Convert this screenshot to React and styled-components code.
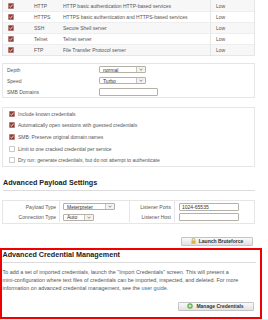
import React from 'react';
import styled, { createGlobalStyle } from 'styled-components';

const GlobalStyle = createGlobalStyle`
  html, body {
    margin: 0;
    padding: 0;
    background: #ffffff;
  }
  body {
    font-family: "Liberation Sans", Arial, sans-serif;
  }
`;

const Page = styled.div`
  width: 268px;
  height: 320px;
  overflow: hidden;
  display: flex;
  flex-direction: column;
  font-size: 5px;
  color: #555;
  background: #fff;
`;

const Box = styled.div`
  margin: ${p => p.$top || 0}px 13px 0 2px;
  border: 1px solid #e6e6e6;
  display: flex;
  flex-direction: column;
`;

const ServiceRow = styled.div`
  display: grid;
  grid-template-columns: 27px 30px 150px 1fr;
  height: 11px;
  box-sizing: border-box;
  align-items: center;
  border-top: ${p => (p.$first ? 'none' : '1px solid #eeeeee')};
  background: ${p => (p.$odd ? '#f7f7f7' : '#ffffff')};
`;

const Cell = styled.div`
  display: flex;
  align-items: center;
  height: 100%;
  padding-left: ${p => p.$pad || 0}px;
  border-left: ${p => (p.$line ? '1px solid #e6e6e6' : 'none')};
  white-space: nowrap;
  overflow: hidden;
`;

const FieldRow = styled.div`
  display: flex;
  align-items: center;
  height: 11px;
  padding-left: 4px;
`;

const FieldLabel = styled.div`
  width: 92px;
`;

const SelectBox = styled.div`
  display: flex;
  align-items: stretch;
  width: ${p => p.$w}px;
  height: 7px;
  border: 1px solid #b5b1a6;
  border-radius: 1px;
  background: #fff;
  color: #333;
  box-sizing: border-box;
`;

const SelectText = styled.div`
  flex: 1;
  display: flex;
  align-items: center;
  padding-left: 3px;
`;

const SelectArrow = styled.div`
  width: 8px;
  border-left: 1px solid #c9c5bb;
  display: flex;
  align-items: center;
  justify-content: center;
  background: #f4f3ef;
`;

const TextInput = styled.div`
  width: ${p => p.$w}px;
  height: 8px;
  border: 1px solid #b5b1a6;
  border-radius: 1px;
  box-sizing: border-box;
  display: flex;
  align-items: center;
  padding-left: 2px;
  color: #333;
`;

const OptionList = styled.div`
  display: flex;
  flex-direction: column;
`;

const OptionRow = styled.div`
  display: flex;
  align-items: center;
  gap: 3px;
  height: 11.6px;
  padding-left: 6px;
`;

const SectionTitle = styled.div`
  margin: ${p => p.$top || 0}px 13px 0 3px;
  font-size: 7.2px;
  font-weight: bold;
  color: #222;
  line-height: 9px;
  padding-bottom: 3px;
  border-bottom: 1px solid #dcdcdc;
`;

const PayloadGrid = styled.div`
  display: grid;
  grid-template-columns: 56px 70px 45px 1fr;
  grid-auto-rows: 10.5px;
  padding: 0.5px 0;
`;

const PayloadLabel = styled.div`
  display: flex;
  align-items: center;
  justify-content: flex-end;
  padding-right: 3px;
  border-left: ${p => (p.$line ? '1px solid #e6e6e6' : 'none')};
`;

const PayloadField = styled.div`
  display: flex;
  align-items: center;
  padding-left: ${p => p.$pad || 3}px;
  border-left: 1px solid #e6e6e6;
`;

const ButtonRow = styled.div`
  display: flex;
  justify-content: flex-end;
  padding-right: ${p => p.$right}px;
  margin-top: ${p => p.$top}px;
`;

const Button = styled.div`
  display: flex;
  align-items: center;
  justify-content: center;
  gap: 3px;
  width: ${p => p.$w}px;
  height: 9px;
  box-sizing: border-box;
  border: 1px solid #c4c4c4;
  border-radius: 1px;
  background: linear-gradient(#fafafa, #e2e2e2);
  color: #333;
  font-weight: bold;
  font-size: 5px;
`;

const Highlight = styled.div`
  margin-top: 2px;
  width: 262px;
  height: 71px;
  flex-shrink: 0;
  box-sizing: border-box;
  border: 2.5px solid #f00000;
  display: flex;
  flex-direction: column;
`;

const HighlightTitle = styled.div`
  margin: 0 4px 0 0.5px;
  font-size: 7.2px;
  font-weight: bold;
  color: #222;
  line-height: 9px;
  padding-bottom: 3px;
  border-bottom: 1px solid #dcdcdc;
`;

const Paragraph = styled.p`
  margin: 5px 0 0 0.5px;
  width: 240px;
  font-size: 5.4px;
  line-height: 8px;
  color: #555;
`;

const NoBreak = styled.span`
  white-space: nowrap;
`;

const Link = styled.span`
  color: #2f6fae;
`;

const BottomStrip = styled.div`
  flex: 1;
  background: #eeeeee;
`;

const Checkbox = ({ checked }) => (
  <svg width="6" height="6" viewBox="0 0 6 6">
    {checked ? (
      <>
        <rect x="0.3" y="0.3" width="5.4" height="5.4" rx="0.6" fill="#8e3b34" stroke="#b98a84" strokeWidth="0.6" />
        <path d="M1.4 3 L2.6 4.2 L4.7 1.6" fill="none" stroke="#f3e6e4" strokeWidth="0.9" />
      </>
    ) : (
      <rect x="0.4" y="0.4" width="5.2" height="5.2" rx="0.5" fill="#fff" stroke="#9a9a9a" strokeWidth="0.6" />
    )}
  </svg>
);

const Chevron = () => (
  <svg width="4" height="3" viewBox="0 0 4 3">
    <path d="M0.5 0.7 L2 2.3 L3.5 0.7" fill="none" stroke="#555" strokeWidth="0.6" />
  </svg>
);

const LockIcon = () => (
  <svg width="5" height="6" viewBox="0 0 5 6">
    <path d="M1.2 2.6 V1.7 A1.3 1.3 0 0 1 3.8 1.7 V2.6" fill="none" stroke="#a88a3c" strokeWidth="0.7" />
    <rect x="0.4" y="2.6" width="4.2" height="3.2" rx="0.4" fill="#e0b440" />
  </svg>
);

const PlusIcon = () => (
  <svg width="6" height="6" viewBox="0 0 6 6">
    <circle cx="3" cy="3" r="2.7" fill="#5fae45" />
    <path d="M3 1.5 V4.5 M1.5 3 H4.5" stroke="#fff" strokeWidth="0.9" />
  </svg>
);

const Select = ({ w, children }) => (
  <SelectBox $w={w}>
    <SelectText>{children}</SelectText>
    <SelectArrow><Chevron /></SelectArrow>
  </SelectBox>
);

const services = [
  ['HTTP', 'HTTP basic authentication HTTP-based services'],
  ['HTTPS', 'HTTPS basic authentication and HTTPS-based services'],
  ['SSH', 'Secure Shell server'],
  ['Telnet', 'Telnet server'],
  ['FTP', 'File Transfer Protocol server'],
];

const options = [
  ['Include known credentials', true],
  ['Automatically open sessions with guessed credentials', true],
  ['SMB: Preserve original domain names', true],
  ['Limit to one cracked credential per service', false],
  ['Dry run: generate credentials, but do not attempt to authenticate', false],
];

const App = () => (
  <Page>
    <GlobalStyle />
    <Box $top={-1}>
      {services.map(([name, desc], i) => (
        <ServiceRow key={name} $first={i === 0} $odd={i % 2 === 0}>
          <Cell $pad={5}><Checkbox checked /></Cell>
          <Cell $pad={4}>{name}</Cell>
          <Cell $pad={3}>{desc}</Cell>
          <Cell $pad={5} $line>Low</Cell>
        </ServiceRow>
      ))}
    </Box>

    <Box $top={7}>
      <FieldRow>
        <FieldLabel>Depth</FieldLabel>
        <Select w={47}>normal</Select>
      </FieldRow>
      <FieldRow>
        <FieldLabel>Speed</FieldLabel>
        <Select w={47}>Turbo</Select>
      </FieldRow>
      <FieldRow>
        <FieldLabel>SMB Domains</FieldLabel>
        <TextInput $w={59} />
      </FieldRow>
    </Box>

    <Box $top={9}>
      <OptionList>
        {options.map(([label, checked]) => (
          <OptionRow key={label}>
            <Checkbox checked={checked} />
            {label}
          </OptionRow>
        ))}
      </OptionList>
    </Box>

    <SectionTitle $top={11}>Advanced Payload Settings</SectionTitle>

    <Box $top={9}>
      <PayloadGrid>
        <PayloadLabel>Payload Type</PayloadLabel>
        <PayloadField><Select w={52}>Meterpreter</Select></PayloadField>
        <PayloadLabel $line>Listener Ports</PayloadLabel>
        <PayloadField $pad={4}><TextInput $w={60}>1024-65535</TextInput></PayloadField>
        <PayloadLabel>Connection Type</PayloadLabel>
        <PayloadField><Select w={31}>Auto</Select></PayloadField>
        <PayloadLabel $line>Listener Host</PayloadLabel>
        <PayloadField $pad={4}><TextInput $w={60} /></PayloadField>
      </PayloadGrid>
    </Box>

    <ButtonRow $top={13} $right={15}>
      <Button $w={72}><LockIcon />Launch Bruteforce</Button>
    </ButtonRow>

    <Highlight>
      <HighlightTitle>Advanced Credential Management</HighlightTitle>
      <Paragraph>
        To add a set of imported credentials, launch the "Import Credentials" screen. This will present a{' '}
        <NoBreak>mini-configuration</NoBreak> where text files of credentials can be imported, inspected, and deleted. For more
        information on advanced credential management, see the <Link>user guide</Link>.
      </Paragraph>
      <ButtonRow $top={10} $right={6.5}>
        <Button $w={76}><PlusIcon />Manage Credentials</Button>
      </ButtonRow>
    </Highlight>
    <BottomStrip />
  </Page>
);

export default App;
